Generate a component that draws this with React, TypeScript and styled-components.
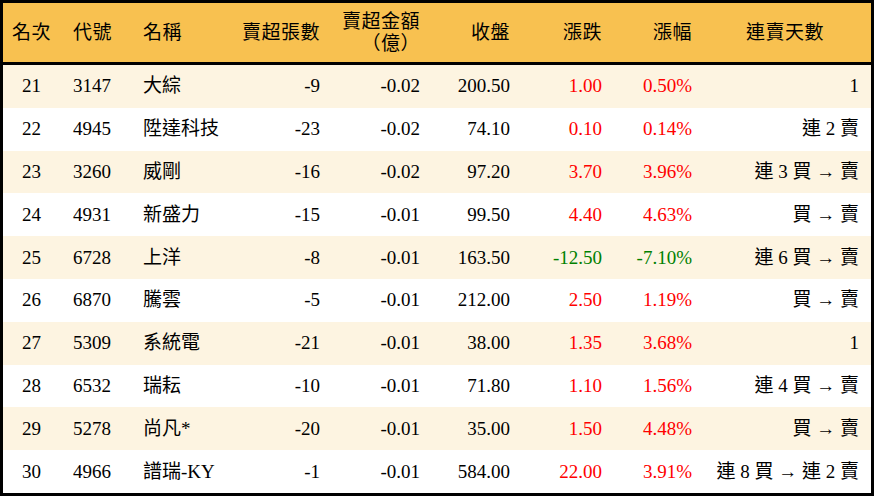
import styled, { createGlobalStyle } from 'styled-components';

const GlobalStyle = createGlobalStyle`
  * {
    box-sizing: border-box;
  }
  body {
    margin: 0;
    background: #ffffff;
    font-family: 'Liberation Serif', 'Noto Sans CJK TC', serif;
    color: #000000;
  }
`;

const COLUMNS = '57px 70px 100px 103px 100px 90px 92px 90px 166px';

const TableWrapper = styled.div`
  width: 874px;
  height: 496px;
  border: 3px solid #000000;
  display: flex;
  flex-direction: column;
  font-size: 19px;
`;

const HeaderRow = styled.div`
  display: grid;
  grid-template-columns: ${COLUMNS};
  height: 62px;
  background-color: #f8c150;
  border-bottom: 3px solid #000000;
`;

const Row = styled.div<{ $striped: boolean }>`
  display: grid;
  grid-template-columns: ${COLUMNS};
  flex: 1;
  background-color: ${props => (props.$striped ? '#fdf4e1' : '#ffffff')};
`;

const Cell = styled.div<{ $align: 'left' | 'center' | 'right'; $color?: string }>`
  display: flex;
  align-items: center;
  justify-content: ${props =>
    props.$align === 'left' ? 'flex-start' : props.$align === 'right' ? 'flex-end' : 'center'};
  text-align: ${props => props.$align};
  padding: ${props =>
    props.$align === 'left' ? '0 0 0 13px' : props.$align === 'right' ? '0 13px 0 0' : '0'};
  color: ${props => props.$color || '#000000'};
  white-space: nowrap;
  line-height: 22px;
`;

const LastCell = styled(Cell)`
  padding: 0 12px 0 6px;
`;

const HeadText = styled.span`
  letter-spacing: 0.5px;
`;

const red = '#ff0000';
const green = '#008000';

type Item = {
  rank: number;
  code: string;
  name: string;
  shares: number;
  amount: string;
  close: string;
  change: string;
  pct: string;
  days: string;
};

const data: Item[] = [
  { rank: 21, code: '3147', name: '大綜', shares: -9, amount: '-0.02', close: '200.50', change: '1.00', pct: '0.50%', days: '1' },
  { rank: 22, code: '4945', name: '陞達科技', shares: -23, amount: '-0.02', close: '74.10', change: '0.10', pct: '0.14%', days: '連 2 賣' },
  { rank: 23, code: '3260', name: '威剛', shares: -16, amount: '-0.02', close: '97.20', change: '3.70', pct: '3.96%', days: '連 3 買 → 賣' },
  { rank: 24, code: '4931', name: '新盛力', shares: -15, amount: '-0.01', close: '99.50', change: '4.40', pct: '4.63%', days: '買 → 賣' },
  { rank: 25, code: '6728', name: '上洋', shares: -8, amount: '-0.01', close: '163.50', change: '-12.50', pct: '-7.10%', days: '連 6 買 → 賣' },
  { rank: 26, code: '6870', name: '騰雲', shares: -5, amount: '-0.01', close: '212.00', change: '2.50', pct: '1.19%', days: '買 → 賣' },
  { rank: 27, code: '5309', name: '系統電', shares: -21, amount: '-0.01', close: '38.00', change: '1.35', pct: '3.68%', days: '1' },
  { rank: 28, code: '6532', name: '瑞耘', shares: -10, amount: '-0.01', close: '71.80', change: '1.10', pct: '1.56%', days: '連 4 買 → 賣' },
  { rank: 29, code: '5278', name: '尚凡*', shares: -20, amount: '-0.01', close: '35.00', change: '1.50', pct: '4.48%', days: '買 → 賣' },
  { rank: 30, code: '4966', name: '譜瑞-KY', shares: -1, amount: '-0.01', close: '584.00', change: '22.00', pct: '3.91%', days: '連 8 買 → 連 2 賣' },
];

const App = () => {
  return (
    <>
      <GlobalStyle />
      <TableWrapper>
        <HeaderRow>
          <Cell $align="center"><HeadText>名次</HeadText></Cell>
          <Cell $align="left"><HeadText>代號</HeadText></Cell>
          <Cell $align="left"><HeadText>名稱</HeadText></Cell>
          <Cell $align="right"><HeadText>賣超張數</HeadText></Cell>
          <Cell $align="right">
            <HeadText>
              賣超金額
              <br />
              （億）
            </HeadText>
          </Cell>
          <Cell $align="right"><HeadText>收盤</HeadText></Cell>
          <Cell $align="right"><HeadText>漲跌</HeadText></Cell>
          <Cell $align="right"><HeadText>漲幅</HeadText></Cell>
          <LastCell $align="center"><HeadText>連賣天數</HeadText></LastCell>
        </HeaderRow>
        {data.map((d, i) => {
          // 跌為綠色，漲為紅色
          const color = d.change.startsWith('-') ? green : red;
          return (
            <Row key={d.rank} $striped={i % 2 === 0}>
              <Cell $align="center">{d.rank}</Cell>
              <Cell $align="left">{d.code}</Cell>
              <Cell $align="left">{d.name}</Cell>
              <Cell $align="right">{d.shares}</Cell>
              <Cell $align="right">{d.amount}</Cell>
              <Cell $align="right">{d.close}</Cell>
              <Cell $align="right" $color={color}>{d.change}</Cell>
              <Cell $align="right" $color={color}>{d.pct}</Cell>
              <LastCell $align="right">{d.days}</LastCell>
            </Row>
          );
        })}
      </TableWrapper>
    </>
  );
};

export default App;
